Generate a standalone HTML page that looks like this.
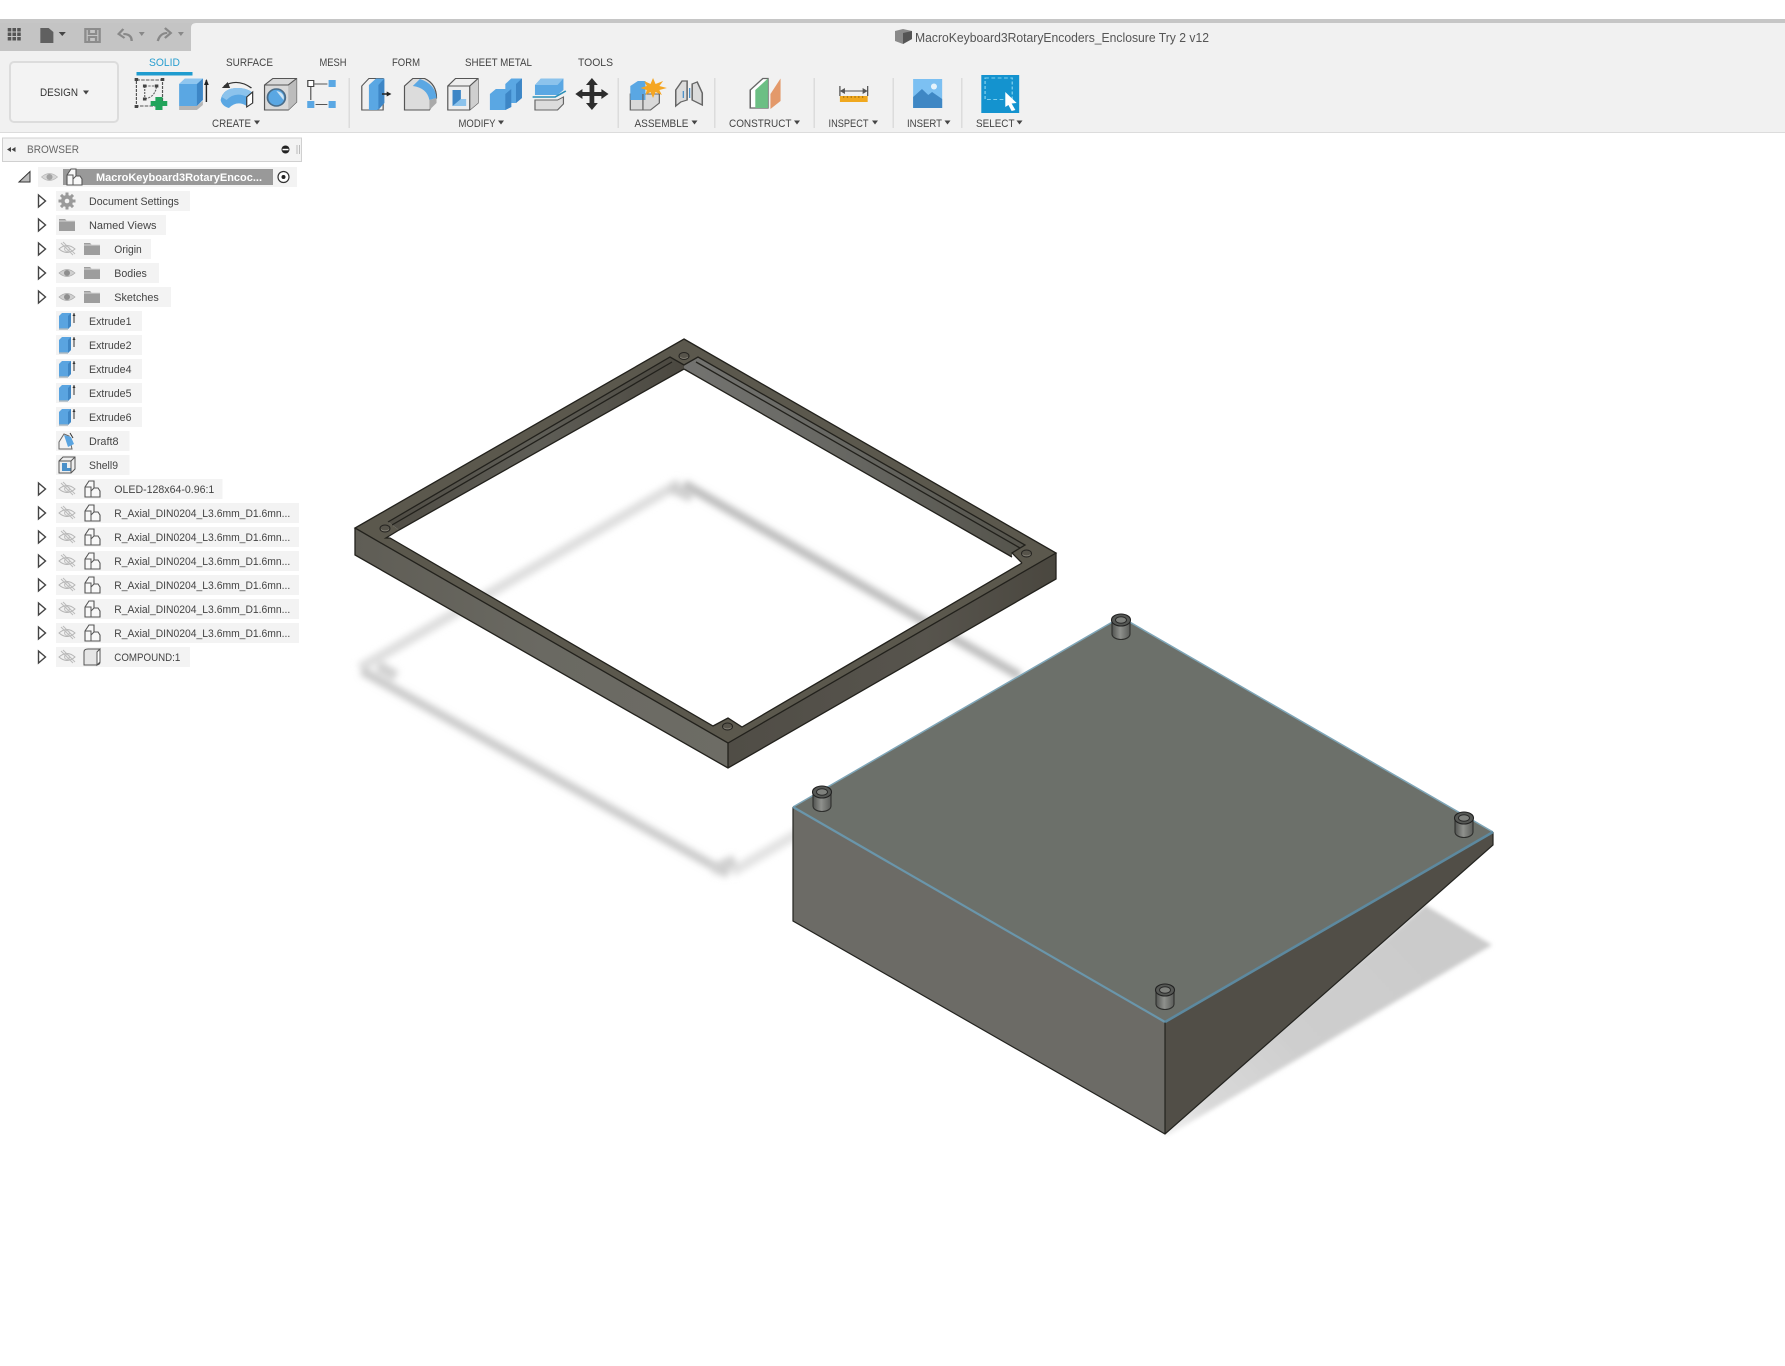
<!DOCTYPE html>
<html><head><meta charset="utf-8"><title>MacroKeyboard3RotaryEncoders_Enclosure Try 2 v12</title>
<style>
html,body{margin:0;padding:0;background:#fff;width:1785px;height:1366px;overflow:hidden}
svg{display:block}
text{font-family:"Liberation Sans",sans-serif;font-size:11px;fill:#444}
</style></head><body>
<svg width="1785" height="1366" viewBox="0 0 1785 1366" xmlns="http://www.w3.org/2000/svg">
<defs>
<filter id="b3" x="-20%" y="-20%" width="140%" height="140%"><feGaussianBlur stdDeviation="3.500"/></filter>
<filter id="b2" x="-20%" y="-20%" width="140%" height="140%"><feGaussianBlur stdDeviation="2"/></filter>
<linearGradient id="sh" gradientUnits="userSpaceOnUse" x1="1170" y1="1134" x2="1420" y2="900"><stop offset="0" stop-color="#efefef"/><stop offset=".14" stop-color="#d9d9d9"/><stop offset=".45" stop-color="#cecece"/><stop offset="1" stop-color="#cbcbcb"/></linearGradient>
<linearGradient id="f1" gradientUnits="userSpaceOnUse" x1="355" y1="0" x2="728" y2="0"><stop offset="0" stop-color="#5f5d55"/><stop offset=".5" stop-color="#6a6962"/><stop offset="1" stop-color="#6d6c65"/></linearGradient>
<linearGradient id="f2" gradientUnits="userSpaceOnUse" x1="728" y1="0" x2="1056" y2="0"><stop offset="0" stop-color="#504d46"/><stop offset=".6" stop-color="#57544d"/><stop offset="1" stop-color="#4a473f"/></linearGradient>
<linearGradient id="w1" gradientUnits="userSpaceOnUse" x1="390" y1="0" x2="684" y2="0"><stop offset="0" stop-color="#504d45"/><stop offset=".5" stop-color="#5f5e57"/><stop offset="1" stop-color="#4b4840"/></linearGradient>
<linearGradient id="w2" gradientUnits="userSpaceOnUse" x1="684" y1="0" x2="1025" y2="0"><stop offset="0" stop-color="#737370"/><stop offset=".5" stop-color="#666661"/><stop offset="1" stop-color="#55544c"/></linearGradient>
<linearGradient id="pin" x1="0" x2="1" y1="0" y2="0"><stop offset="0" stop-color="#515350"/><stop offset=".45" stop-color="#8f918d"/><stop offset="1" stop-color="#5a5c59"/></linearGradient>
<g id="exp"><polygon points="-3.500,-6 3.500,0 -3.500,6" fill="#fff" stroke="#444" stroke-width="1.400"/></g>
<g id="eye"><path d="M-8,0 Q0,-7 8,0 Q0,7 -8,0Z" fill="#d0d0d0" stroke="#aaa" stroke-width=".8"/><circle r="3" fill="#8e8e8e"/></g>
<g id="eyeoff"><path d="M-8,0 Q0,-7 8,0 Q0,7 -8,0Z" fill="#f0f0f0" stroke="#b5b5b5" stroke-width="1"/><circle r="2.400" fill="none" stroke="#bbb"/><path d="M-6,-6 L6,6 M-4,-7 L8,5" stroke="#bbb" stroke-width="1"/></g>
<g id="folder"><path d="M-8,-6 H-2 L0,-4 H8 V6 H-8Z" fill="#9d9d9d"/><path d="M-8,-4 H8" stroke="#d8d8d8" stroke-width="1"/></g>
<g id="comp"><path d="M-7,-2 L-3,-8 H2 V-1 H6 L8,2 V8 H-7Z" fill="#f8f8f8" stroke="#555" stroke-width="1.100"/><path d="M2,-1 L-1,2 V8 M-7,-2 H-1 V2" fill="none" stroke="#555" stroke-width="1"/></g>
<g id="ext"><path d="M-8,-5 L-5,-8 H4 V5 L1,8 H-8Z" fill="#5aa4e0"/><path d="M4,-8 V5 L1,8 V-5Z" fill="#3f86c4"/><path d="M-8,8 H1" stroke="#a9b6c0" stroke-width="1.500"/><path d="M7,-8 V2" stroke="#333" stroke-width="1"/><path d="M5.500,-5 L7,-8 L8.500,-5" fill="#333"/></g>
<polygon id="tri" points="-3,-2 3,-2 0,2" fill="#444"/>
<g id="pinshape"><path d="M-9,0 V14 A9,5.500 0 0 0 9,14 V0Z" fill="url(#pin)" stroke="#2e2f2d" stroke-width="1.100"/><ellipse rx="9.500" ry="6" fill="#565855" stroke="#222" stroke-width="1.100"/><ellipse rx="5.500" ry="3.300" fill="#7f817d" stroke="#2a2a2a" stroke-width="1"/></g>
<g id="hole"><ellipse rx="5" ry="3.500" fill="#57544b" stroke="#242320" stroke-width="1"/><path d="M-4,1 A5,3.500 0 0 0 4,1" stroke="#8a877c" fill="none" stroke-width=".8"/></g>
</defs>

<rect width="1785" height="1366" fill="#fff"/>

<!-- toolbar -->
<rect x="0" y="19" width="1785" height="113" fill="#f1f1f1"/>
<rect x="0" y="19" width="1785" height="4" fill="#c6c6c6"/>
<path d="M0,23 H196 Q191,23 191,28 V51 H0Z" fill="#c4c4c4"/>
<rect x="0" y="132" width="1785" height="1" fill="#dcdcdc"/>

<g transform="scale(1.1862,1)">
<!-- qat -->
<g fill="#555"><rect x="6.500" y="28" width="3" height="3.500"/><rect x="10.500" y="28" width="3" height="3.500"/><rect x="14.500" y="28" width="3" height="3.500"/><rect x="6.500" y="32.500" width="3" height="3.500"/><rect x="10.500" y="32.500" width="3" height="3.500"/><rect x="14.500" y="32.500" width="3" height="3.500"/><rect x="6.500" y="37" width="3" height="3.500"/><rect x="10.500" y="37" width="3" height="3.500"/><rect x="14.500" y="37" width="3" height="3.500"/></g>
<path d="M34,28 H41 L45,32 V43 H34Z" fill="#606060"/>
<use href="#tri" x="52.500" y="34" fill="#666"/>
<path d="M72,29 H84 V42 H72Z M75,29 V34 H81 V29 M75,42 V37 H81 V42" fill="none" stroke="#8c8c8c" stroke-width="2"/>
<path d="M111,41 Q111,34 104,34 M104,29 L100,34 L105,38" fill="none" stroke="#888" stroke-width="2"/>
<polygon points="117,32 122,32 119.500,36" fill="#888"/>
<path d="M133,41 Q135,33 141,33 M139,28 L144,33 L139,38" fill="none" stroke="#888" stroke-width="2"/>
<polygon points="150,32 155,32 152.500,36" fill="#888"/>
<!-- icon: sketch -->
<path d="M115,80 H137 V106 H115Z" fill="none" stroke="#555" stroke-width="1" stroke-dasharray="3 1"/>
<path d="M122,86 H132 M122,86 V99 M122,99 Q131,97 132,86" fill="none" stroke="#666" stroke-width="1" stroke-dasharray="2 1"/>
<g fill="#444"><rect x="113.500" y="78" width="3" height="3"/><rect x="135.500" y="78" width="3" height="3"/><rect x="113.500" y="105" width="3" height="3"/><rect x="120.500" y="84.500" width="3" height="3"/><rect x="130.500" y="84.500" width="3" height="3"/><rect x="120.500" y="97.500" width="3" height="3"/></g>
<path d="M131,97 H137 V101 H141 V106 H137 V110 H131 V106 H127 V101 H131Z" fill="#22a45b"/>
<!-- extrude -->
<path d="M151,84 L156,78.500 H171 V100 L166,106 H151Z" fill="#5aa7e3"/><path d="M166,84 L171,78.500 V100 L166,106Z" fill="#3d86c6"/><path d="M151,84 L156,78.500 H171 L166,84Z" fill="#8fc6ef"/>
<path d="M151,106 H166 L171,101 V105 L166,110 H151Z" fill="#b5b5b5"/>
<path d="M174,80 V102" stroke="#222" stroke-width="1.200"/><path d="M172,85 L174,79 L176,85Z" fill="#222"/>
<!-- revolve -->
<path d="M189,86 Q200,78 212,88" fill="none" stroke="#333" stroke-width="1.200"/><path d="M192,82 L187,88 L194,88Z" fill="#333"/>
<path d="M186,100 Q188,88 200,88 Q208,88 212,92 L208,106 Q200,100 193,108 Q187,106 186,100Z" fill="#5aa7e3"/><path d="M187,97 Q190,88 200,88 Q208,88 212,92 L209,97 Q198,91 191,100Z" fill="#8cc3ec"/>
<path d="M208,97 L213,92 V103 L208,107Z" fill="#fff" stroke="#333"/>
<!-- hole -->
<path d="M223,85 L230,78.500 H250 V102 L243,110 H223Z" fill="#d9d9d9" stroke="#555"/><path d="M243,85 L250,78.500 V102 L243,110Z" fill="#bcbcbc"/><path d="M223,85 H243 L250,78.500" fill="none" stroke="#555"/>
<ellipse cx="233" cy="97.500" rx="7.500" ry="8.500" fill="#5aa7e3" stroke="#4a6c88" stroke-width="1.500"/><path d="M233,91 A7,7 0 0 1 239,100 Z" fill="#cfe4f3"/>
<!-- pattern -->
<rect x="259.500" y="80.500" width="5" height="6" fill="#fff" stroke="#444"/><rect x="277" y="80" width="6" height="7" fill="#5aa7e3"/><rect x="259" y="101" width="6" height="7" fill="#5aa7e3"/><rect x="277" y="101" width="6" height="7" fill="#5aa7e3"/>
<path d="M265,84 H276 M262,87 V100 M266,104.500 H276" stroke="#555" stroke-width="1"/>
<!-- press pull -->
<path d="M305,110 V86 L311,78.500 H323 L323,110Z" fill="#f0f0f0" stroke="#555"/><path d="M311,85 L317,78.500 H324 V103 L318,110 H311Z" fill="#5aa7e3"/><path d="M319,85 L324,78.500 V103 L319,110Z" fill="#3d86c6"/>
<path d="M322,94 H328" stroke="#222" stroke-width="1.500"/><path d="M326,91.500 L330,94 L326,96.500Z" fill="#222"/>
<!-- fillet -->
<path d="M341,110 V86 L348,78.500 H358 Q368,84 368,98 L362,110Z" fill="#dcdcdc" stroke="#555"/><path d="M354,79 Q367,84 368,98 L362,100 Q360,88 348,86Z" fill="#5aa7e3"/><path d="M362,100 L368,98 V103 L362,110Z" fill="#aaa"/>
<!-- shell -->
<path d="M377.500,86 L384,78.500 H403 V103 L396,110 H377.500Z" fill="#eee" stroke="#555"/><path d="M396,86 L403,78.500 V103 L396,110Z" fill="#cfcfcf"/><path d="M377.500,86 H396 V110 M396,86 L403,78.500" fill="none" stroke="#555"/>
<path d="M381.500,90 H388.500 V99 H393 V106 H381.500Z" fill="#8cc3ec"/><path d="M381.500,90 H388.500 V99 L381.500,106Z" fill="#3d86c6"/>
<!-- combine -->
<path d="M413,94 L418,89 H426 V84 L431,78.500 H440 V98 L435,103 H431 V107 L426,110 H413Z" fill="#5aa7e3"/><path d="M435,84 L440,78.500 V98 L435,103Z" fill="#3d86c6"/><path d="M426,94 L431,89 V107 L426,110Z" fill="#3d86c6"/>
<!-- split -->
<path d="M451,85 L456,78.500 H475 V90 L470,95 H451Z" fill="#5aa7e3"/><path d="M451,85 L456,78.500 H475 L470,85Z" fill="#8cc3ec"/>
<path d="M451,100 H470 L475,97 V104 L470,110 H451Z" fill="#dcdcdc" stroke="#666"/>
<path d="M449,97 H468 L477,91" fill="none" stroke="#2a8fb8" stroke-width="1.500"/>
<!-- move -->
<path d="M499,78 L504,85 H501 V92 H507 V89 L513,94 L507,99 V96 H501 V103 H504 L499,110 L494,103 H497 V96 H491 V99 L485,94 L491,89 V92 H497 V85 H494Z" fill="#2d2d2d"/>
</g>

<g transform="translate(600,0) scale(1.2626,1) translate(-600,0)">
<!-- assemble -->
<path d="M624,94 H647 V103 L640,110 H624Z" fill="#d9d9d9" stroke="#666"/><path d="M624,86 L630,81 H636 V100 H624Z" fill="#5aa7e3"/><path d="M634,94 V110" stroke="#666"/>
<polygon points="642,78 644,84 650,81 647,86 653,88 647,90 649,95 644,92 642,98 640,92 636,95 637,90 632,88 637,86 635,81 640,84" fill="#f5a623"/>
<!-- joint -->
<path d="M660,106 V90 L665,81 H669 V100 L664,102Z M681,105 V93 L677,82 L673,84 V100Z" fill="#dcdcdc" stroke="#666" stroke-width="1.200"/><path d="M671,88 V98 M666,91 V98" stroke="#4a8fc8"/>
<!-- construct -->
<path d="M719,108 V90 L729,78.500 H733 V108Z" fill="#fff" stroke="#666" stroke-width="1.200"/><path d="M723,90 L733,78.500 V108 H723Z" fill="#6cbf84"/><path d="M735,94 L743,78.500 V101 L735,109Z" fill="#e3996a"/>
<!-- inspect -->
<path d="M790,86 V96 M812,86 V96 M791,91 H811" stroke="#555" stroke-width="1" fill="none"/><path d="M794,88 L790,91 L794,94 M808,88 L812,91 L808,94" fill="#555"/><rect x="790" y="96" width="22" height="6" fill="#f0a81e"/><path d="M793,96v2M796,96v2M799,96v2M802,96v2M805,96v2M808,96v2" stroke="#b57c10"/>
<!-- insert -->
<rect x="848" y="79" width="23" height="29" fill="#7cc0f2"/><path d="M848,108 V97 L855,89 L860,95 L863,92 L871,99 V108Z" fill="#3f87c4"/><ellipse cx="864.500" cy="86.500" rx="2.400" ry="3" fill="#e6f3fb"/>
<!-- select -->
<rect x="902" y="75" width="30" height="38" fill="#1493cf"/><rect x="905" y="78" width="21.500" height="21.500" fill="none" stroke="#7fd0ee" stroke-width="1" stroke-dasharray="3 2"/>
<path d="M921,92 L930,103 L926,103.500 L929,110 L926,111 L923.500,105 L921,107Z" fill="#fff"/>
</g>

<!-- title -->
<path d="M895,31 L903,29 L912,31 V39 L903,44 L895,41Z" fill="#8a8a8a"/><path d="M903,33 L912,31 V39 L903,44Z" fill="#555"/>
<text x="915" y="42" textLength="294" lengthAdjust="spacingAndGlyphs" style="font-size:13px;fill:#555">MacroKeyboard3RotaryEncoders_Enclosure Try 2 v12</text>
<!-- design -->
<rect x="10" y="62" width="108" height="60" rx="4" fill="#f3f3f3" stroke="#dcdcdc" stroke-width="2"/>
<text x="40" y="96" textLength="38" lengthAdjust="spacingAndGlyphs" style="fill:#333">DESIGN</text>
<use href="#tri" x="86" y="92.500"/>
<!-- tabs -->
<text x="149" y="66" textLength="31" lengthAdjust="spacingAndGlyphs" style="fill:#2a9fd0">SOLID</text>
<text x="226" y="66" textLength="47" lengthAdjust="spacingAndGlyphs">SURFACE</text>
<text x="319.500" y="66" textLength="27" lengthAdjust="spacingAndGlyphs">MESH</text>
<text x="392" y="66" textLength="28" lengthAdjust="spacingAndGlyphs">FORM</text>
<text x="465" y="66" textLength="67" lengthAdjust="spacingAndGlyphs">SHEET METAL</text>
<text x="578" y="66" textLength="35" lengthAdjust="spacingAndGlyphs">TOOLS</text>
<rect x="136.500" y="72" width="56" height="3.500" fill="#1f9ccf"/>
<!-- separators -->
<g fill="#dcdcdc"><rect x="348.500" y="78" width="1.500" height="50"/><rect x="617.500" y="78" width="1.500" height="50"/><rect x="714" y="78" width="1.500" height="50"/><rect x="813.500" y="78" width="1.500" height="50"/><rect x="892.500" y="78" width="1.500" height="50"/><rect x="961" y="78" width="1.500" height="50"/></g>
<!-- labels -->
<text x="212" y="127" textLength="39" lengthAdjust="spacingAndGlyphs">CREATE</text><use href="#tri" x="257" y="122.500"/>
<text x="458.500" y="127" textLength="37" lengthAdjust="spacingAndGlyphs">MODIFY</text><use href="#tri" x="501" y="122.500"/>
<text x="634.500" y="127" textLength="54" lengthAdjust="spacingAndGlyphs">ASSEMBLE</text><use href="#tri" x="694.500" y="122.500"/>
<text x="729" y="127" textLength="62.500" lengthAdjust="spacingAndGlyphs">CONSTRUCT</text><use href="#tri" x="797" y="122.500"/>
<text x="828.500" y="127" textLength="40" lengthAdjust="spacingAndGlyphs">INSPECT</text><use href="#tri" x="875" y="122.500"/>
<text x="907" y="127" textLength="35" lengthAdjust="spacingAndGlyphs">INSERT</text><use href="#tri" x="947.500" y="122.500"/>
<text x="976" y="127" textLength="38.500" lengthAdjust="spacingAndGlyphs">SELECT</text><use href="#tri" x="1019.500" y="122.500"/>

<!-- browser -->
<rect x="2.500" y="138" width="299" height="23.500" fill="#f3f3f3" stroke="#d0d0d0"/>
<path d="M11,147 L7,149.500 L11,152Z M15.500,147 L11.500,149.500 L15.500,152Z" fill="#444"/>
<text x="27" y="153" textLength="52" lengthAdjust="spacingAndGlyphs" style="fill:#666">BROWSER</text>
<circle cx="285.500" cy="149.500" r="4" fill="#222"/><rect x="282.500" y="148.800" width="6" height="1.500" fill="#fff"/>
<path d="M297,145 V154 M299.500,145 V154" stroke="#bbb"/>
<!-- root -->
<rect x="38" y="167" width="259" height="20" fill="#f3f3f3"/>
<path d="M19,182 L30,171.500 V182Z" fill="#bbb" stroke="#333" stroke-width="1"/>
<use href="#eye" x="49.500" y="177" opacity=".8"/>
<rect x="63" y="169" width="210" height="16" fill="#999"/>
<use href="#comp" x="74" y="177"/>
<text x="96" y="181" textLength="166" lengthAdjust="spacingAndGlyphs" style="fill:#fff;font-weight:700">MacroKeyboard3RotaryEncoc...</text>
<circle cx="283.500" cy="177" r="5.500" fill="#fff" stroke="#333" stroke-width="1.200"/><circle cx="283.500" cy="177" r="2" fill="#222"/>

<!-- rows backgrounds -->
<g fill="#f3f3f3">
<rect x="56" y="191" width="134" height="20"/><rect x="56" y="215" width="110" height="20"/><rect x="56" y="239" width="95" height="20"/><rect x="56" y="263" width="103" height="20"/><rect x="56" y="287" width="115" height="20"/>
<rect x="56" y="311" width="86" height="20"/><rect x="56" y="335" width="86" height="20"/><rect x="56" y="359" width="86" height="20"/><rect x="56" y="383" width="86" height="20"/><rect x="56" y="407" width="86" height="20"/>
<rect x="56" y="431" width="73.500" height="20"/><rect x="56" y="455" width="73.500" height="20"/><rect x="56" y="479" width="166.500" height="20"/>
<rect x="56" y="503" width="243" height="20"/><rect x="56" y="527" width="243" height="20"/><rect x="56" y="551" width="243" height="20"/><rect x="56" y="575" width="243" height="20"/><rect x="56" y="599" width="243" height="20"/><rect x="56" y="623" width="243" height="20"/>
<rect x="56" y="647" width="134" height="20"/>
</g>
<!-- expanders -->
<use href="#exp" x="42" y="201"/><use href="#exp" x="42" y="225"/><use href="#exp" x="42" y="249"/><use href="#exp" x="42" y="273"/><use href="#exp" x="42" y="297"/>
<use href="#exp" x="42" y="489"/><use href="#exp" x="42" y="513"/><use href="#exp" x="42" y="537"/><use href="#exp" x="42" y="561"/><use href="#exp" x="42" y="585"/><use href="#exp" x="42" y="609"/><use href="#exp" x="42" y="633"/><use href="#exp" x="42" y="657"/>
<!-- gear -->
<g transform="translate(67,201)"><circle r="6" fill="#9a9a9a"/><path d="M-1.500,-8.500H1.500V8.500H-1.500Z M-8.500,-1.500H8.500V1.500H-8.500Z" fill="#9a9a9a"/><path d="M-1.500,-8.500H1.500V8.500H-1.500Z M-8.500,-1.500H8.500V1.500H-8.500Z" fill="#9a9a9a" transform="rotate(45)"/><circle r="2.300" fill="#f3f3f3"/></g>
<use href="#folder" x="67" y="225"/>
<use href="#eyeoff" x="67" y="249"/><use href="#folder" x="92" y="249"/>
<use href="#eye" x="67" y="273"/><use href="#folder" x="92" y="273"/>
<use href="#eye" x="67" y="297"/><use href="#folder" x="92" y="297"/>
<use href="#ext" x="67" y="321"/><use href="#ext" x="67" y="345"/><use href="#ext" x="67" y="369"/><use href="#ext" x="67" y="393"/><use href="#ext" x="67" y="417"/>
<g transform="translate(67,441)"><path d="M-8,8 V1 L-3,-7 L2,-5 L5,8Z" fill="#f3f3f3" stroke="#666"/><path d="M-3,-6 L4,-4 L7,3 L1,6Z" fill="#5aa4e0"/><path d="M3,-8 L6,-3" stroke="#333"/></g>
<g transform="translate(67,465)"><path d="M-8,-4 L-4,-8 H8 V4 L4,8 H-8Z" fill="#eee" stroke="#555"/><path d="M-5,-2 H0 V3 H4 V6 H-5Z" fill="#4a8fc8"/><path d="M4,-4 L8,-8" stroke="#555"/><path d="M-8,-4H4V8" fill="none" stroke="#555"/></g>
<use href="#eyeoff" x="67" y="489"/><use href="#comp" x="92" y="489"/>
<use href="#eyeoff" x="67" y="513"/><use href="#comp" x="92" y="513"/>
<use href="#eyeoff" x="67" y="537"/><use href="#comp" x="92" y="537"/>
<use href="#eyeoff" x="67" y="561"/><use href="#comp" x="92" y="561"/>
<use href="#eyeoff" x="67" y="585"/><use href="#comp" x="92" y="585"/>
<use href="#eyeoff" x="67" y="609"/><use href="#comp" x="92" y="609"/>
<use href="#eyeoff" x="67" y="633"/><use href="#comp" x="92" y="633"/>
<use href="#eyeoff" x="67" y="657"/>
<g transform="translate(92,657)"><path d="M-8,-5 Q-8,-8 -4,-8 H8 V5 Q8,8 4,8 H-8Z" fill="#e6e6e6" stroke="#555"/><path d="M5,-5 L8,-8 V5 L5,8Z" fill="#fff" stroke="#555"/></g>
<!-- row text -->
<text x="89" y="205" textLength="90" lengthAdjust="spacingAndGlyphs">Document Settings</text>
<text x="89" y="229" textLength="67.500" lengthAdjust="spacingAndGlyphs">Named Views</text>
<text x="114.300" y="253" textLength="27.500" lengthAdjust="spacingAndGlyphs">Origin</text>
<text x="114.300" y="277" textLength="32.500" lengthAdjust="spacingAndGlyphs">Bodies</text>
<text x="114.300" y="301" textLength="44.500" lengthAdjust="spacingAndGlyphs">Sketches</text>
<text x="89" y="325" textLength="42.500" lengthAdjust="spacingAndGlyphs">Extrude1</text>
<text x="89" y="349" textLength="42.500" lengthAdjust="spacingAndGlyphs">Extrude2</text>
<text x="89" y="373" textLength="42.500" lengthAdjust="spacingAndGlyphs">Extrude4</text>
<text x="89" y="397" textLength="42.500" lengthAdjust="spacingAndGlyphs">Extrude5</text>
<text x="89" y="421" textLength="42.500" lengthAdjust="spacingAndGlyphs">Extrude6</text>
<text x="89" y="445" textLength="29.500" lengthAdjust="spacingAndGlyphs">Draft8</text>
<text x="89" y="469" textLength="29" lengthAdjust="spacingAndGlyphs">Shell9</text>
<text x="114.300" y="493" textLength="100" lengthAdjust="spacingAndGlyphs">OLED-128x64-0.96:1</text>
<text x="114.300" y="517" textLength="176" lengthAdjust="spacingAndGlyphs">R_Axial_DIN0204_L3.6mm_D1.6mn...</text>
<text x="114.300" y="541" textLength="176" lengthAdjust="spacingAndGlyphs">R_Axial_DIN0204_L3.6mm_D1.6mn...</text>
<text x="114.300" y="565" textLength="176" lengthAdjust="spacingAndGlyphs">R_Axial_DIN0204_L3.6mm_D1.6mn...</text>
<text x="114.300" y="589" textLength="176" lengthAdjust="spacingAndGlyphs">R_Axial_DIN0204_L3.6mm_D1.6mn...</text>
<text x="114.300" y="613" textLength="176" lengthAdjust="spacingAndGlyphs">R_Axial_DIN0204_L3.6mm_D1.6mn...</text>
<text x="114.300" y="637" textLength="176" lengthAdjust="spacingAndGlyphs">R_Axial_DIN0204_L3.6mm_D1.6mn...</text>
<text x="114.300" y="661" textLength="66" lengthAdjust="spacingAndGlyphs">COMPOUND:1</text>

<!-- frame shadow -->
<g filter="url(#b3)" fill="none" stroke-linejoin="round">
<path d="M680,483 L360,668" stroke="#dedede" stroke-width="10"/>
<path d="M362,671 L728,874" stroke="#cacaca" stroke-width="9"/>
<path d="M684,484 L1020,676" stroke="#bcbcbc" stroke-width="9"/>
<path d="M732,872 L800,832" stroke="#e2e2e2" stroke-width="10"/>
<path d="M670,487 L692,497 M378,666 L396,676 M712,870 L735,860" stroke="#d0d0d0" stroke-width="11"/>
</g>

<!-- frame -->
<path fill-rule="evenodd" fill="#5b584d" d="M684,339 L1056,553 L728,743 L355,528Z M670,357 L684,365 L698,357 L1025,545 L1012,553 L1022,563 L742,727 L728,718 L713,726 L390,538 L386,538 L399,530 L388,522Z"/>
<polygon points="388,522 670,357 684,365 684,369 399,530" fill="url(#w1)"/>
<polygon points="684,365 698,357 1025,545 1012,553 1012,557 684,369" fill="url(#w2)"/>
<polygon points="355,528 728,743 728,768 355,555" fill="url(#f1)"/>
<polygon points="728,743 1056,553 1056,579 728,768" fill="url(#f2)"/>
<g fill="none" stroke="#22211c" stroke-width="1.300">
<path d="M684,339 L1056,553 L728,743 L355,528Z"/>
<path d="M355,528 V555 L728,768 L1056,579 V553 M728,743 V768"/>
<path d="M388,522 L670,357 L684,365 L698,357 L1025,545 L1012,553 L1022,563"/>
<path d="M392,525 L672,362 M696,362 L1020,548"/>
<path d="M684,369 L399,530 L386,538 L390,538 L713,726 L728,718 L742,727 L1022,563 M684,369 L1012,557"/>
</g>
<use href="#hole" x="684" y="356"/><use href="#hole" x="385" y="528.500"/><use href="#hole" x="1026.500" y="553.500"/><use href="#hole" x="727.500" y="726.500"/>

<!-- box shadow -->
<polygon points="1425,905 1492,945 1167,1136 1160,1130" fill="url(#sh)" filter="url(#b2)"/>
<!-- box -->
<polygon points="1121,617 1493,832 1165,1022 793,807" fill="#6c706a"/>
<polygon points="793,807 1165,1022 1165,1134 793,921" fill="#6c6b66"/>
<polygon points="1165,1022 1493,832 1493,845 1165,1134" fill="#514e47"/>
<path d="M793,807 V921 L1165,1134 L1493,845 V832 M1165,1022 V1134" fill="none" stroke="#23231f" stroke-width="1.200"/>
<path d="M793,807 L1121,617 L1493,832" fill="none" stroke="#7fa6b8" stroke-width="1.500"/>
<path d="M793,807 L1165,1022" fill="none" stroke="#6a96ab" stroke-width="2.200"/>
<path d="M1165,1022 L1493,832" fill="none" stroke="#5d899f" stroke-width="2.600"/>
<use href="#pinshape" x="822" y="792"/><use href="#pinshape" x="1121" y="620"/><use href="#pinshape" x="1464" y="818"/><use href="#pinshape" x="1165" y="990"/>
</svg>
</body></html>
